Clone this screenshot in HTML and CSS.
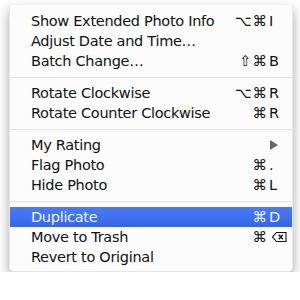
FILE: index.html
```html
<!DOCTYPE html>
<html>
<head>
  <title>Photo Menu</title>
  <link rel="stylesheet" href="styles.css">
</head>
<body>
  <div class="menu">
    <div class="item"><span class="label">Show Extended Photo Info</span><span class="mods">⌥⌘</span><span class="key">I</span></div>
    <div class="item"><span class="label">Adjust Date and Time…</span></div>
    <div class="item"><span class="label">Batch Change…</span><span class="mods">⇧⌘</span><span class="key">B</span></div>
    <div class="sep"></div>
    <div class="item"><span class="label">Rotate Clockwise</span><span class="mods">⌥⌘</span><span class="key">R</span></div>
    <div class="item"><span class="label">Rotate Counter Clockwise</span><span class="mods">⌘</span><span class="key">R</span></div>
    <div class="sep"></div>
    <div class="item"><span class="label">My Rating</span><span class="arrow"></span></div>
    <div class="item"><span class="label">Flag Photo</span><span class="mods">⌘</span><span class="key">.</span></div>
    <div class="item"><span class="label">Hide Photo</span><span class="mods">⌘</span><span class="key">L</span></div>
    <div class="sep"></div>
    <div class="item active"><span class="label">Duplicate</span><span class="mods">⌘</span><span class="key">D</span></div>
    <div class="item"><span class="label">Move to Trash</span><span class="mods">⌘</span><span class="key">
      <svg class="del" width="15" height="12" viewBox="0 0 15 12">
        <path d="M4.5 1.5 H14 V10.5 H4.5 L0.6 6 Z" fill="none" stroke="#111" stroke-width="1.1"/>
        <path d="M6.8 3.8 L10.8 8.2 M10.8 3.8 L6.8 8.2" stroke="#111" stroke-width="1.4"/>
      </svg></span></div>
    <div class="item"><span class="label">Revert to Original</span></div>
  </div>
</body>
</html>
```

FILE: styles.css
```css
body {
  margin: 0;
  padding: 5px 0 0 9px;
  background: #fff;
  font-family: "DejaVu Sans", "Noto Sans", sans-serif;
  font-size: 14.5px;
  letter-spacing: -0.3px;
  color: #111;
}

.menu {
  width: 284px;
  box-sizing: border-box;
  padding: 6px 0 4px;
  background: #fcfcfc;
  border: 1px solid rgba(0, 0, 0, 0.08);
  border-top: none;
  border-radius: 0 0 5px 5px;
  box-shadow: 0 5px 12px rgba(0, 0, 0, 0.35);
}

.item {
  display: flex;
  align-items: center;
  height: 20px;
  padding: 0 10px 0 21px;
  white-space: nowrap;
}

.label {
  flex: 1;
}

.mods {
  text-align: right;
  letter-spacing: 1px;
}

.key {
  width: 13px;
  padding-left: 1px;
  display: flex;
  align-items: center;
}

.del {
  flex-shrink: 0;
  margin-left: 3px;
}

.arrow {
  width: 0;
  height: 0;
  margin-right: 4px;
  border-top: 5px solid transparent;
  border-bottom: 5px solid transparent;
  border-left: 8px solid #666;
}

.sep {
  height: 1px;
  margin: 6px 0 5px;
  background: #e2e2e2;
}

.item.active {
  background: linear-gradient(#4c7cf2, #3465ea);
  color: #eef3ff;
}
```
